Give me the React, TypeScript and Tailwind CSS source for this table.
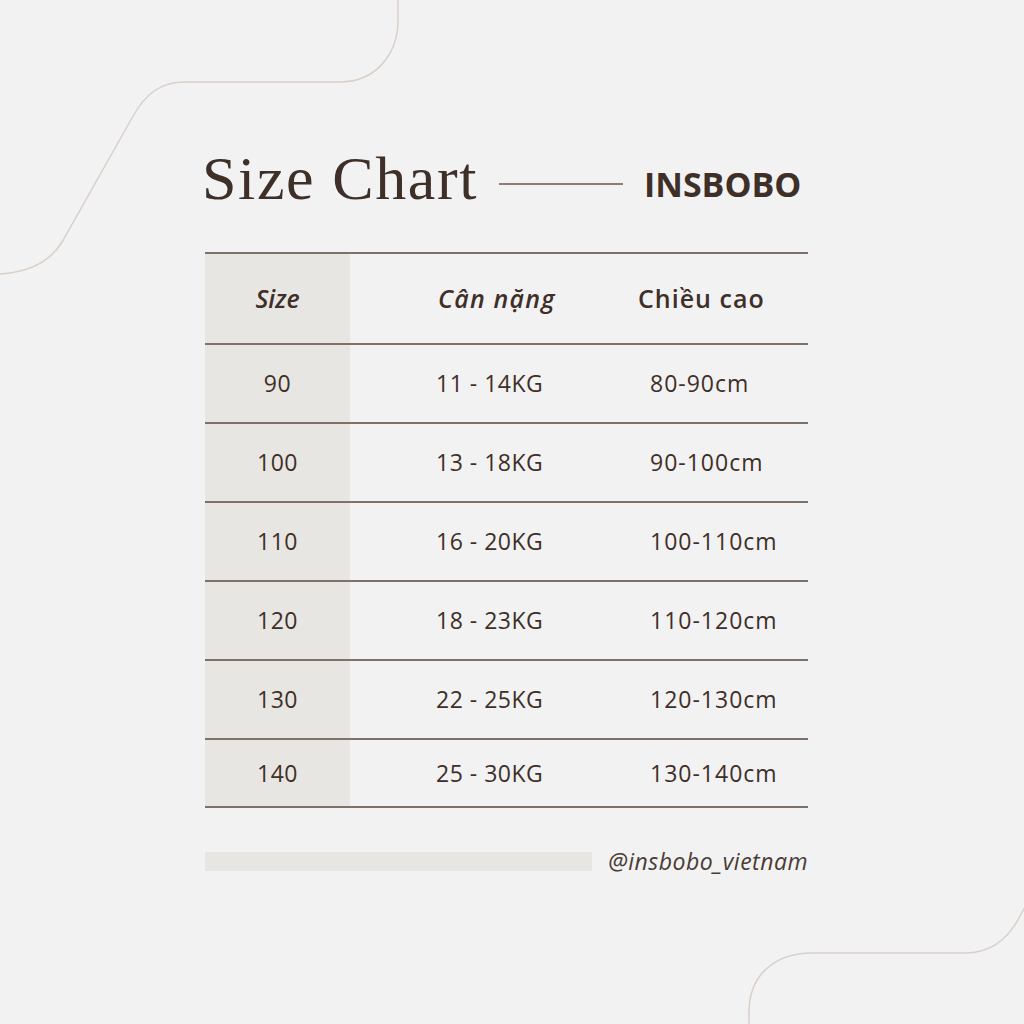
import React from 'react';

const rows = [
  { size: '90', kg: '11 - 14KG', cm: '80-90cm' },
  { size: '100', kg: '13 - 18KG', cm: '90-100cm' },
  { size: '110', kg: '16 - 20KG', cm: '100-110cm' },
  { size: '120', kg: '18 - 23KG', cm: '110-120cm' },
  { size: '130', kg: '22 - 25KG', cm: '120-130cm' },
  { size: '140', kg: '25 - 30KG', cm: '130-140cm' },
];

const Curves: React.FC = () => (
  <>
    <svg className="absolute left-0 top-0" width="420" height="290" viewBox="0 0 420 290" fill="none">
      <path
        d="M0 274 C 30 272 50 262 62 242 L 132 118 C 145 94 160 82 185 82 L 340 82 C 375 82 398 55 398 20 L 398 0"
        stroke="#d9d0ca"
        strokeWidth="1.5"
      />
    </svg>
    <svg className="absolute left-[730px] top-[880px]" width="294" height="144" viewBox="0 0 294 144" fill="none">
      <path
        d="M19 144 L 19 132 C 19 95 45 73 82 73 L 235 73 C 260 73 278 60 290 36 L 300 18"
        stroke="#d9d0ca"
        strokeWidth="1.5"
      />
    </svg>
  </>
);

export default function App() {
  return (
    <div className="relative w-[1024px] h-[1024px] overflow-hidden bg-[#f2f2f2] text-[#3e2f28]" style={{ fontFamily: '"Open Sans", sans-serif' }}>
      <Curves />
      <div className="relative ml-[205px] w-[603px] pt-[146px]">
        {/* Title */}
        <div className="flex items-center h-[70px]">
          <h1 className="-ml-[3px] text-[62px] leading-none font-normal tracking-[1.6px] -mt-[6px]" style={{ fontFamily: '"Liberation Serif", serif' }}>
            Size Chart
          </h1>
          <div className="ml-[21px] w-[124px] h-[1.5px] bg-[#8a7f78] mt-[6px]" />
          <div className="ml-[21px] text-[34px] font-bold tracking-[0px] mt-[6px]">INSBOBO</div>
        </div>

        {/* Table */}
        <div className="mt-[36px] border-t-2 border-[#7d716a]">
          <div className="flex h-[91px] items-center border-b-2 border-[#7d716a]">
            <div className="w-[145px] h-full flex items-center justify-center bg-[#e8e6e2] text-[25px] font-semibold italic">
              Size
            </div>
            <div className="w-[270px] pl-[88px] text-[25px] font-semibold italic tracking-[1.2px]">Cân nặng</div>
            <div className="pl-[18px] text-[25px] font-semibold tracking-[1px]">Chiều cao</div>
          </div>
          {rows.map((r, i) => (
            <div
              key={r.size}
              className={`flex items-center border-b-2 border-[#7d716a] ${i === rows.length - 1 ? 'h-[68px]' : 'h-[79px]'}`}
            >
              <div className="w-[145px] h-full flex items-center justify-center bg-[#e8e6e2] text-[23px] tracking-[0.5px]">
                {r.size}
              </div>
              <div className="w-[270px] pl-[86px] text-[23px] tracking-[0.5px]">{r.kg}</div>
              <div className="pl-[30px] text-[23px] tracking-[1px]">{r.cm}</div>
            </div>
          ))}
        </div>

        {/* Footer */}
        <div className="mt-[36px] flex items-center">
          <div className="w-[387px] h-[19px] bg-[#e8e6e2]" />
          <div className="ml-auto text-[23px] italic tracking-[0.5px] text-[#4a3c35]">@insbobo_vietnam</div>
        </div>
      </div>
    </div>
  );
}
